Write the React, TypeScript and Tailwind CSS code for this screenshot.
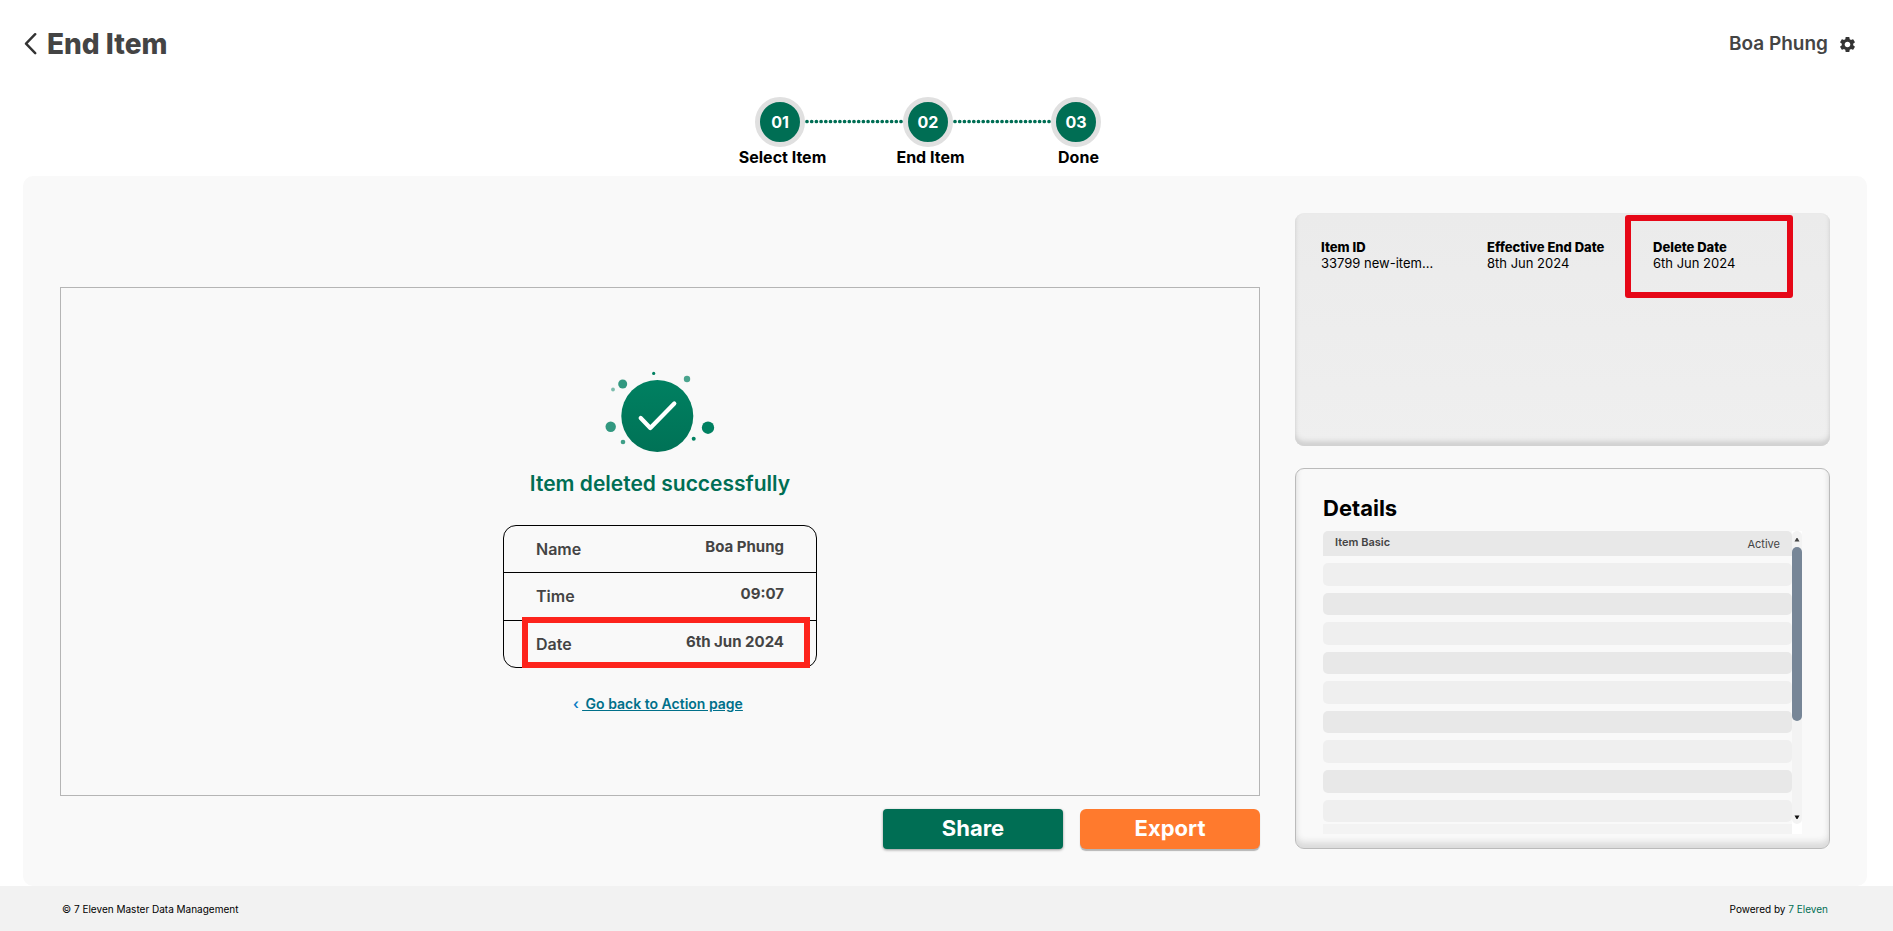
import React from "react";
import { MdSettings } from "react-icons/md";

const steps = [
  { number: "01", label: "Select Item" },
  { number: "02", label: "End Item" },
  { number: "03", label: "Done" },
];

const summary = [
  { label: "Item ID", value: "33799 new-item..." },
  { label: "Effective End Date", value: "8th Jun 2024" },
  { label: "Delete Date", value: "6th Jun 2024", marked: true },
];

const receipt = [
  { label: "Name", value: "Boa Phung" },
  { label: "Time", value: "09:07" },
  { label: "Date", value: "6th Jun 2024", marked: true },
];

const emptyRows = Array.from({ length: 9 }, (_, i) => i);

function Header() {
  return (
    <header className="flex h-[88px] items-center justify-between pl-6 pr-9">
      <div className="flex items-center gap-[10px]">
        <button type="button" aria-label="Back" className="text-[#333]">
          <svg width="13" height="23" viewBox="0 0 13 23" fill="none" stroke="currentColor" strokeWidth="2.4" strokeLinecap="round" strokeLinejoin="round">
            <path d="M11.2 1.2 L2 10.7 L11.2 20.2" />
          </svg>
        </button>
        <h1 className="text-[28px] leading-8 font-extrabold text-[#444]">End Item</h1>
      </div>
      <div className="flex items-center gap-[10px]">
        <span className="text-[19px] leading-6 font-semibold text-[#444]">Boa Phung</span>
        <button type="button" aria-label="Settings" className="text-[#333]">
          <MdSettings size={19} />
        </button>
      </div>
    </header>
  );
}

function Connector() {
  return (
    <svg className="absolute left-[99px] top-[22px]" width="98" height="5" viewBox="0 0 98 5" aria-hidden="true">
      <line x1="2" y1="2.5" x2="97" y2="2.5" stroke="#006e54" strokeWidth="3.7" strokeLinecap="round" strokeDasharray="0 4.7" />
    </svg>
  );
}

function Stepper() {
  return (
    <ol className="flex h-[79px] justify-center pr-[37px]">
      {steps.map((step, i) => (
        <li key={step.number} className="relative flex w-[148px] flex-col items-center">
          <span className="flex size-[50px] items-center justify-center rounded-full border-5 border-[#e0e0e0] bg-[#006e54] text-base font-bold text-white">
            {step.number}
          </span>
          <span className="pl-[5px] text-base leading-5 font-bold text-black">{step.label}</span>
          {i < steps.length - 1 && <Connector />}
        </li>
      ))}
    </ol>
  );
}

function SuccessMark() {
  return (
    <svg width="110" height="82" viewBox="0 0 110 82" aria-hidden="true">
      <defs>
        <linearGradient id="disc" x1="0" y1="0" x2="0" y2="1">
          <stop offset="0" stopColor="#008061" />
          <stop offset="1" stopColor="#007256" />
        </linearGradient>
      </defs>
      <circle cx="52.3" cy="45" r="36" fill="url(#disc)" />
      <g fill="#008061">
        <circle cx="17.7" cy="13" r="4.5" opacity="0.8" />
        <circle cx="8" cy="18.5" r="1.9" opacity="0.5" />
        <circle cx="48.7" cy="2.4" r="1.6" />
        <circle cx="82" cy="8" r="3.2" opacity="0.7" />
        <circle cx="5.7" cy="55.7" r="5.2" opacity="0.8" />
        <circle cx="18" cy="71" r="2.3" opacity="0.75" />
        <circle cx="88.7" cy="67.7" r="2" />
        <circle cx="103" cy="56.7" r="6.2" />
      </g>
      <path d="M35.7 47 L45.3 57 L69.3 32.5" fill="none" stroke="#fff" strokeWidth="4.2" strokeLinecap="round" strokeLinejoin="round" />
    </svg>
  );
}

function Receipt() {
  return (
    <dl className="mt-[27px] w-[314px] divide-y divide-black rounded-[13px] border border-black">
      {receipt.map((row) => (
        <div key={row.label} className="relative flex h-12 items-start justify-between px-8 pt-[11px] text-[#444] first:h-[47px] last:h-[46px]">
          <dt className="pt-[2px] text-base leading-5 font-semibold">{row.label}</dt>
          <dd className="text-[15px] leading-5 font-bold">{row.value}</dd>
          {row.marked && <span className="absolute -top-1 -bottom-px left-[18px] right-[6px] border-6 border-[#fd241c]" />}
        </div>
      ))}
    </dl>
  );
}

function Result() {
  return (
    <section className="mt-[74px] flex flex-1 flex-col items-center justify-center border border-[#b5b5b5] pt-[2px]">
      <SuccessMark />
      <h2 className="mt-[17px] text-[21px] leading-7 font-semibold text-[#006e54]">Item deleted successfully</h2>
      <Receipt />
      <a href="#actions" className="mt-[26px] flex pr-1 text-[14px] leading-5 font-semibold text-[#00708a]">
        <span className="w-[9px] text-[#0a7cc4]">‹</span>
        <span className="whitespace-pre underline"> Go back to Action page</span>
      </a>
    </section>
  );
}

function Summary() {
  return (
    <section className="h-[233px] rounded-[9px] bg-linear-to-b from-[#ebebeb] to-[#efefef] pl-[26px] shadow-[inset_0_-5px_5px_#d2d2d2,inset_0_-2px_3px_#d8d8d8]">
      <dl className="flex pt-[26px]">
        {summary.map((item) => (
          <div key={item.label} className="relative w-[166px] text-[13px] leading-4 text-black">
            <dt className="font-extrabold">{item.label}</dt>
            <dd>{item.value}</dd>
            {item.marked && <span className="absolute -top-6 -left-7 h-[83px] w-[168px] rounded-[3px] border-6 border-[#e60717]" />}
          </div>
        ))}
      </dl>
    </section>
  );
}

function Details() {
  return (
    <section className="flex flex-1 flex-col rounded-[9px] border border-[#bbb] pt-[25px] pr-[27px] pb-[14px] pl-[27px] shadow-[inset_0_-6px_6px_#dcdcdc,inset_0_-2px_3px_#e4e4e4]">
      <h2 className="text-[22px] leading-7 font-bold text-black">Details</h2>
      <div className="mt-[9px] flex flex-1">
        <div className="flex flex-1 flex-col">
          <table className="flex flex-1 flex-col text-[11px] text-[#444]">
            <tbody className="flex flex-1 flex-col gap-[7px]">
              <tr className="flex h-[25px] items-start justify-between rounded-t-[5px] bg-[#e8e8e8] px-3">
                <th scope="row" className="pt-1 leading-[14px] font-semibold">Item Basic</th>
                <td className="pt-[6px] leading-[14px]">Active</td>
              </tr>
              {emptyRows.map((row) => (
                <tr key={row} className="flex flex-1 rounded-[5px] odd:bg-[#e8e8e8] even:bg-[#efefef]">
                  <td />
                </tr>
              ))}
            </tbody>
          </table>
          <div className="mt-[2px] h-[10px] bg-[#f3f3f3]" />
        </div>
        <div className="flex w-[10px] flex-col bg-white">
          <div className="flex flex-1 flex-col items-center rounded-[5px] bg-[#f3f3f3]">
            <svg className="mt-[7px]" width="6" height="4" viewBox="0 0 6 4" aria-hidden="true">
              <path d="M0.5 3.5 L2.5 0 H3.5 L5.5 3.5 Z" fill="#444" />
            </svg>
            <div className="mt-[5px] h-[174px] w-full rounded-[5px] bg-[#778697]" />
            <svg className="mt-auto mb-[5px]" width="6" height="4" viewBox="0 0 6 4" aria-hidden="true">
              <path d="M0.5 0.5 L2.5 4 H3.5 L5.5 0.5 Z" fill="#111" />
            </svg>
          </div>
          <div className="h-[10px]" />
        </div>
      </div>
    </section>
  );
}

export default function App() {
  return (
    <div className="flex min-h-screen flex-col bg-white font-['Inter',sans-serif]">
      <Header />
      <div className="pt-[9px]">
        <Stepper />
      </div>
      <main className="mr-[26px] ml-[23px] grid flex-1 grid-cols-[1200fr_535fr] gap-[35px] rounded-[10px] bg-[#f9f9f9] p-[37px]">
        <div className="flex flex-col">
          <Result />
          <div className="mt-[13px] flex justify-end gap-[17px] text-[22px] leading-7 font-bold text-white">
            <button type="button" className="h-10 w-[180px] rounded-[4px] bg-[#006e54] pb-[2px] shadow-[0_1px_3px_rgba(0,0,0,0.4)]">Share</button>
            <button type="button" className="h-10 w-[180px] rounded-[6px] bg-[#ff7a2d] pb-[2px] shadow-[0_2px_1px_#b5b5b5]">Export</button>
          </div>
        </div>
        <div className="flex flex-col gap-[22px]">
          <Summary />
          <Details />
        </div>
      </main>
      <footer className="flex h-[45px] items-center justify-between bg-[#f2f2f2] pt-[2px] pr-[65px] pl-[62px] text-[10px] text-black">
        <p>© 7 Eleven Master Data Management</p>
        <p>
          Powered by <a href="#seven-eleven" className="text-[#006e54]">7 Eleven</a>
        </p>
      </footer>
    </div>
  );
}
